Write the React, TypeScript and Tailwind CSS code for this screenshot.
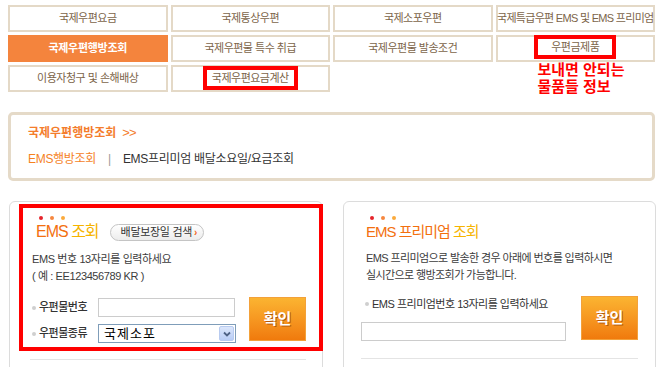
const tabBase =
  "h-[27px] border-2 border-[#e4d9c7] flex items-center justify-center whitespace-nowrap text-[11px] tracking-[-0.5px] text-[#7c6449]";

const Dots = ({ className = "" }: { className?: string }) => (
  <div className={`flex h-[4px] gap-[7px] ${className}`}>
    <span className="h-[4px] w-[4px] rounded-full bg-[#e5242b]" />
    <span className="h-[4px] w-[4px] rounded-full bg-[#f6873f]" />
    <span className="h-[4px] w-[4px] rounded-full bg-[#fbaa3c]" />
  </div>
);

const OkButton = () => (
  <button className="h-[44px] w-[57px] shrink-0 border border-[#f3a13a] bg-linear-to-b from-[#fbb431] to-[#f07a0c] text-[15px] font-bold text-white [text-shadow:1px_1px_0_#b5590a]">
    확인
  </button>
);

const App = () => {
  return (
    <div className="h-[367px] w-[660px] overflow-hidden bg-white [font-family:'Liberation_Sans','Noto_Sans_CJK_KR',sans-serif]">
      {/* TOP TABS */}
      <div className="ml-[8px] grid w-[647px] grid-cols-4 gap-[3px] pt-[5px]">
        <div className={tabBase}>국제우편요금</div>
        <div className={tabBase}>국제통상우편</div>
        <div className={tabBase}>국제소포우편</div>
        <div className={`${tabBase} text-[10px] tracking-[-0.7px]`}>
          국제특급우편 EMS 및 EMS 프리미엄
        </div>

        <div className="flex h-[27px] items-center justify-center bg-[#f4843d] text-[11px] font-bold tracking-[-0.3px] text-white">
          국제우편행방조회
        </div>
        <div className={tabBase}>국제우편물 특수 취급</div>
        <div className={tabBase}>국제우편물 발송조건</div>
        <div className={`${tabBase} items-start`}>
          <span className="-mt-[2px] flex h-[24px] items-center border-4 border-[#ff0000] px-[13px]">
            우편금제품
          </span>
        </div>

        <div className={tabBase}>이용자청구 및 손해배상</div>
        <div className={`${tabBase} items-start`}>
          <span className="-mt-[1px] flex h-[24px] items-center border-4 border-[#ff0000] px-[5px]">
            국제우편요금계산
          </span>
        </div>
        <div />
        <div className="relative">
          {/* annotation */}
          <div className="absolute left-[42px] top-[-4px] whitespace-nowrap text-[15px] font-bold leading-[17px] text-[#ff0000]">
            보내면 안되는
            <br />
            물품들 정보
          </div>
        </div>
      </div>

      {/* BREADCRUMB BOX */}
      <div className="ml-[8px] mt-[20px] h-[69px] w-[647px] rounded-[5px] border-[3px] border-[#e5dac8] pl-[17px] pt-[10px]">
        <div className="flex items-center text-[12px] font-bold leading-[16px] text-[#f47d2c]">
          국제우편행방조회
          <span className="ml-[6px] text-[13px] font-normal tracking-[-1px]">&gt;&gt;</span>
        </div>
        <div className="mt-[10px] flex items-center text-[12px] leading-[16px] tracking-[-0.3px]">
          <span className="text-[#f5821f]">EMS행방조회</span>
          <span className="mx-[12px] text-[#999]">|</span>
          <span className="text-[#333]">EMS프리미엄 배달소요일/요금조회</span>
        </div>
      </div>

      {/* LOOKUP PANELS */}
      <div className="mt-[20px] flex">
        {/* EMS */}
        <div className="relative ml-[9px] h-[180px] w-[314px] rounded-t-[6px] border border-[#dcdcdc] pl-[22px] pr-[16px]">
          <Dots className="ml-[7px] mt-[14px]" />
          <div className="mt-[2px] flex h-[20px] items-center">
            <span className="ml-[4px] text-[16px] tracking-[-1px] text-[#f3700f]">
              EMS <span className="text-[#f6b400]">조회</span>
            </span>
            <span className="ml-[11px] flex h-[17px] items-center rounded-full border border-[#c4c4c4] bg-linear-to-b from-white to-[#ececec] pl-[10px] pr-[6px] text-[11px] tracking-[-0.3px] text-[#333]">
              배달보장일 검색
              <span className="ml-[2px] text-[10px] font-bold text-[#f2661a]">›</span>
            </span>
          </div>
          <div className="mt-[8px] text-[11px] leading-[17px] tracking-[-0.4px] text-[#3c3c3c]">
            <div className="pt-[1px]">EMS 번호 13자리를 입력하세요</div>
            <div>( 예 : EE123456789 KR )</div>
          </div>
          <div className="mt-[12px] flex h-[46px] justify-between">
            <div className="flex flex-col">
              <div className="mt-[1px] flex h-[19px] items-center">
                <span className="h-[4px] w-[4px] rounded-full bg-[#cfcfcf]" />
                <span className="ml-[3px] w-[59px] text-[11px] font-medium tracking-[-0.5px] text-[#333]">우편물번호</span>
                <div className="h-[19px] w-[137px] border border-[#cccccc] bg-white" />
              </div>
              <div className="mt-[7px] flex h-[19px] items-center">
                <span className="h-[4px] w-[4px] rounded-full bg-[#cfcfcf]" />
                <span className="ml-[3px] w-[59px] text-[11px] font-medium tracking-[-0.5px] text-[#333]">우편물종류</span>
                <div className="flex h-[19px] w-[138px] items-center justify-between border border-[#7f9db9] bg-white pl-[5px] pr-[1px]">
                  <span className="text-[13px] leading-none tracking-[1px] text-black">국제소포</span>
                  <span className="flex h-[15px] w-[15px] items-center justify-center rounded-[2px] border border-[#b8cbf0] bg-linear-to-b from-[#dbe6fb] to-[#b9cdf6]">
                    <svg width="8" height="6" viewBox="0 0 8 6">
                      <path d="M1 1.5 L4 4.5 L7 1.5" fill="none" stroke="#4d6185" strokeWidth="1.8" />
                    </svg>
                  </span>
                </div>
              </div>
            </div>
            <OkButton />
          </div>
          <div className="-ml-[2px] mt-[16px] h-px bg-[#e4e4e4]" />
          {/* red highlight */}
          <div className="pointer-events-none absolute left-[9px] top-[2px] h-[147px] w-[304px] border-4 border-[#ff0000]" />
        </div>

        {/* EMS PREMIUM */}
        <div className="ml-[20px] h-[180px] w-[313px] rounded-t-[6px] border border-[#dcdcdc] pl-[22px] pr-[17px]">
          <Dots className="ml-[4px] mt-[14px]" />
          <div className="mt-[2px] flex h-[20px] items-center">
            <span className="text-[15px] tracking-[-1px] text-[#f3700f]">
              EMS 프리미엄 <span className="text-[#f6b400]">조회</span>
            </span>
          </div>
          <div className="mt-[8px] text-[11px] leading-[17px] tracking-[-0.6px] text-[#3c3c3c]">
            <div>EMS 프리미엄으로 발송한 경우 아래에 번호를 입력하시면</div>
            <div>실시간으로 행방조회가 가능합니다.</div>
          </div>
          <div className="mt-[12px] flex h-[46px] justify-between">
            <div className="-ml-[5px] flex flex-col">
              <div className="flex h-[16px] items-center pl-[4px]">
                <span className="h-[4px] w-[4px] rounded-full bg-[#cfcfcf]" />
                <span className="ml-[3px] text-[11px] tracking-[-0.5px] text-[#333]">
                  EMS 프리미엄번호 13자리를 입력하세요
                </span>
              </div>
              <div className="mt-[10px] h-[19px] w-[205px] border border-[#cccccc] bg-white" />
            </div>
            <OkButton />
          </div>
          <div className="-ml-[5px] mt-[16px] h-px bg-[#e4e4e4]" />
        </div>
      </div>
    </div>
  );
};

export default App;
